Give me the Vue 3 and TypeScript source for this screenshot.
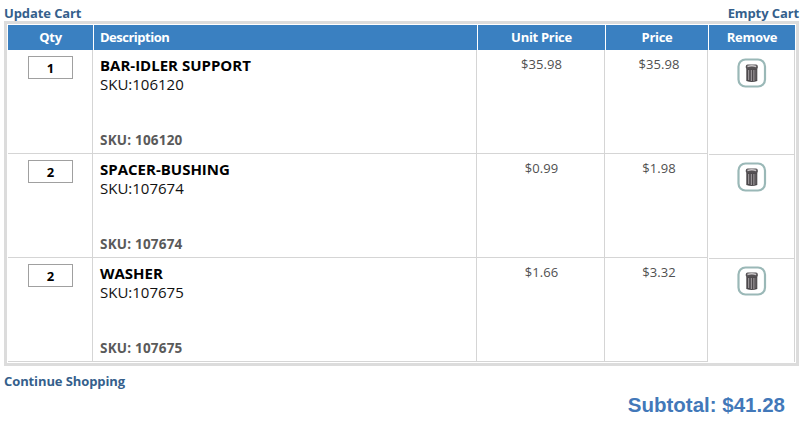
<script setup lang="ts">
interface CartLine {
  sku: string
  name: string
  qty: number
  unit: string
  price: string
}

const lines: CartLine[] = [
  { sku: '106120', name: 'BAR-IDLER SUPPORT', qty: 1, unit: '$35.98', price: '$35.98' },
  { sku: '107674', name: 'SPACER-BUSHING', qty: 2, unit: '$0.99', price: '$1.98' },
  { sku: '107675', name: 'WASHER', qty: 2, unit: '$1.66', price: '$3.32' },
]
</script>

<template>
  <main class="page">
    <nav class="actions">
      <a class="link update">Update Cart</a>
      <a class="link empty">Empty Cart</a>
    </nav>

    <section class="cart">
      <div class="row head">
        <div class="th center">Qty</div>
        <div class="th desc-head">Description</div>
        <div class="th center">Unit Price</div>
        <div class="th center">Price</div>
        <div class="th center">Remove</div>
      </div>
      <div v-for="line in lines" :key="line.sku" class="row line">
        <div class="td qty"><span class="box">{{ line.qty }}</span></div>
        <div class="td desc">
          <div class="name">{{ line.name }}</div>
          <div class="code">SKU:{{ line.sku }}</div>
          <div class="sku">SKU: {{ line.sku }}</div>
        </div>
        <div class="td money">{{ line.unit }}</div>
        <div class="td money total">{{ line.price }}</div>
        <div class="td remove">
          <svg class="bin" width="30" height="30" viewBox="0 0 30 30">
            <rect x="1.5" y="1.5" width="26.5" height="27" rx="7" fill="#fff" stroke="#9ab8b7" stroke-width="2.2" />
            <path d="M9.3 10.5h11v12.4q-5.5 2-11 0z" fill="#4c484b" />
            <path d="M11.7 12v10M14.3 12v11M16.9 12v11" stroke="#aaa5a8" stroke-width="1" />
            <path d="M18.8 12v10" stroke="#777376" stroke-width=".7" />
            <rect x="8.8" y="6.6" width="12" height="4.8" rx="1.8" fill="#555154" />
            <path d="M10.4 8.4q4.4-1.2 8.8 0" fill="none" stroke="#c8c4c6" stroke-width="1.6" />
          </svg>
        </div>
      </div>
    </section>

    <a class="link continue">Continue Shopping</a>
    <div class="subtotal">Subtotal: $41.28</div>
  </main>
</template>

<style>
body {
  background: #fff;
}
</style>

<style scoped>
.page {
  box-sizing: border-box;
  width: 806px;
  height: 423px;
  padding: 5px 7px 0 4px;
  overflow: hidden;
  background: #fff;
  font-family: "Open Sans", "Noto Sans", sans-serif;
  white-space: nowrap;
}
.actions {
  display: flex;
  justify-content: space-between;
  height: 16px;
}
.link {
  font-size: 13px;
  font-weight: 700;
  line-height: 17px;
  letter-spacing: -0.1px;
  color: #355f8c;
}
.cart {
  box-sizing: border-box;
  width: 795px;
  height: 345px;
  border: 3px solid #dcdcdc;
  padding: 1px;
}
.row {
  display: grid;
  grid-template-columns: 85px 384px 128px 103px 87px;
}
.head {
  height: 25px;
  background: #3a80c1;
  color: #fff;
  font-size: 13px;
  font-weight: 700;
  line-height: 25px;
  letter-spacing: -0.3px;
}
.th {
  border-left: 1px solid #fff;
}
.th:first-child {
  border-left: 0;
}
.desc-head {
  padding-left: 6px;
  letter-spacing: -0.5px;
}
.center {
  text-align: center;
}
.line {
  height: 104px;
}
.td {
  box-sizing: border-box;
  height: 104px;
  border-right: 1px solid #d5d5d5;
  border-bottom: 1px solid #d5d5d5;
}
.qty {
  padding: 6px 0 0 20px;
}
.box {
  display: block;
  box-sizing: border-box;
  width: 45px;
  height: 23px;
  border: 1px solid #a0a0a0;
  text-align: center;
  font-size: 13px;
  font-weight: 700;
  line-height: 23px;
  color: #000;
}
.desc {
  padding: 6px 0 0 7px;
}
.name {
  font-size: 15px;
  font-weight: 700;
  line-height: 19px;
  color: #000;
}
.code {
  font-size: 15px;
  line-height: 19px;
  color: #111;
}
.sku {
  margin-top: 36px;
  font-size: 13.5px;
  font-weight: 700;
  line-height: 20px;
  letter-spacing: 0.2px;
  color: #5a5a5a;
}
.money {
  padding: 5px 0 0 2px;
  text-align: center;
  font-size: 13px;
  line-height: 18px;
  letter-spacing: 0.1px;
  color: #505050;
}
.total {
  padding-left: 6px;
}
.remove {
  height: 105px;
  margin-left: 1px;
  padding: 8px 0 0 28px;
}
.line:last-child .remove {
  height: 104px;
  border-bottom: 0;
}
.bin {
  display: block;
}
.continue {
  display: block;
  margin-top: 7px;
}
.subtotal {
  margin-top: 3px;
  padding-right: 14px;
  text-align: right;
  font-family: "Liberation Sans", Arial, sans-serif;
  font-size: 20.5px;
  font-weight: 700;
  line-height: 24px;
  color: #4278b9;
}
</style>
